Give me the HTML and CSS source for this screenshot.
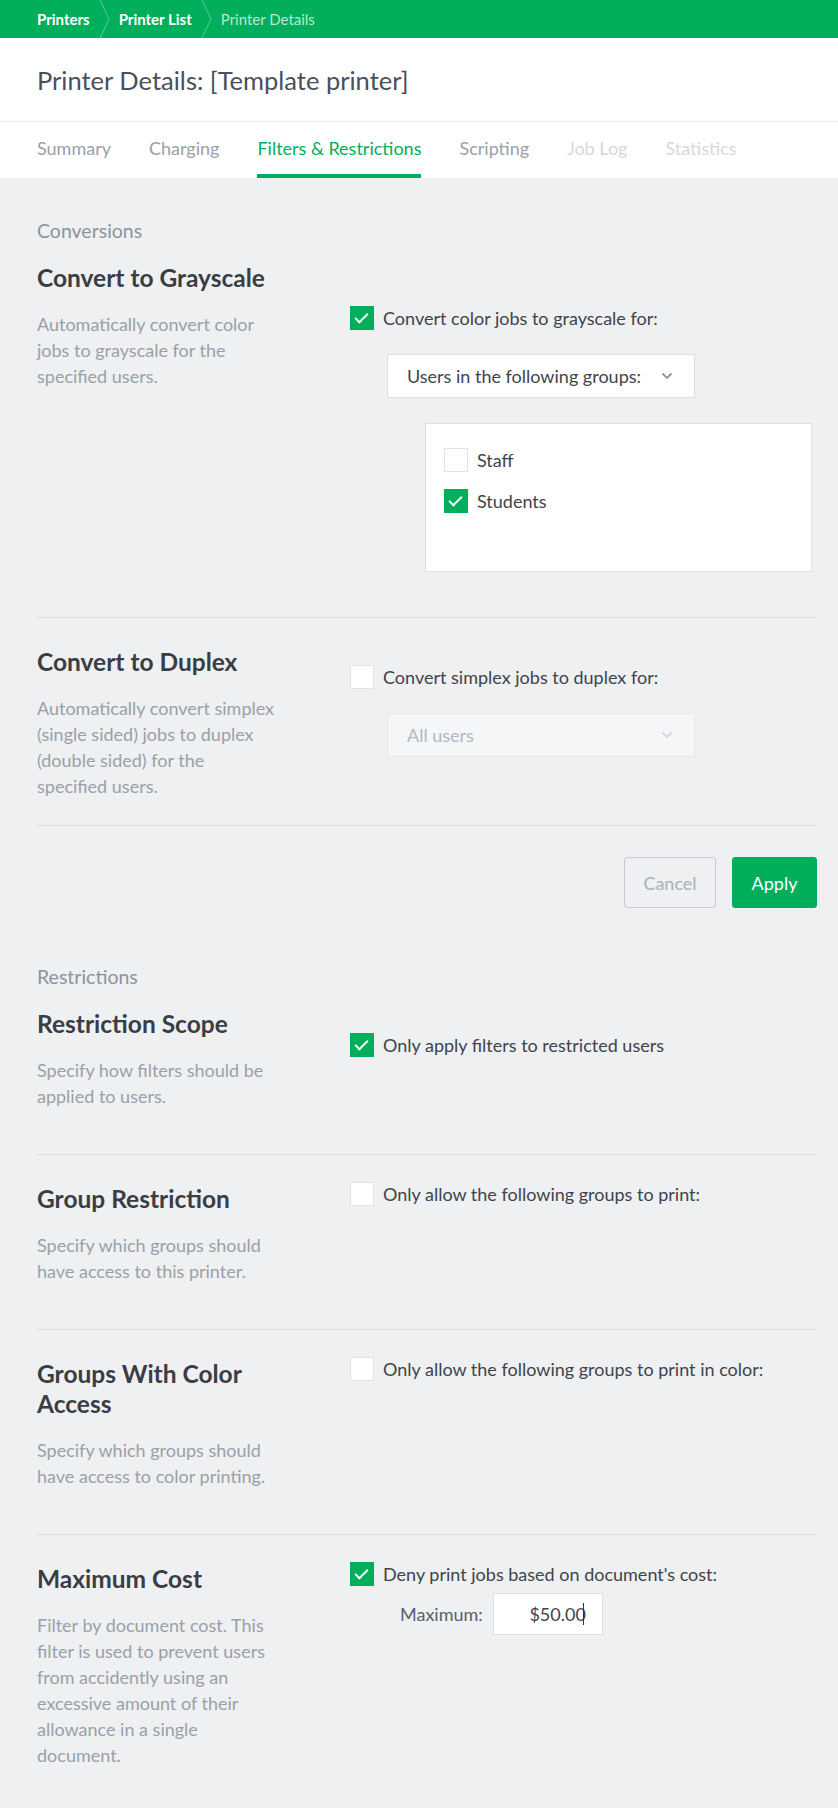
FILE: index.html
```html
<!DOCTYPE html>
<html>

<head>
	<meta charset="UTF-8">
	<title>Printer Details</title>
	<link rel="stylesheet" href="styles.css">
</head>

<body>
	<div class="crumbs">
		<a class="crumb" href="#">Printers</a>
		<svg class="crumb-sep" width="12" height="38" viewBox="0 0 12 38"><path d="M1 0 L10 19 L1 38" fill="none" stroke="rgba(255,255,255,0.35)" stroke-width="1"/></svg>
		<a class="crumb" href="#">Printer List</a>
		<svg class="crumb-sep" width="12" height="38" viewBox="0 0 12 38"><path d="M1 0 L10 19 L1 38" fill="none" stroke="rgba(255,255,255,0.35)" stroke-width="1"/></svg>
		<span class="crumb current">Printer Details</span>
	</div>

	<div class="page-head">
		<h1>Printer Details: [Template printer]</h1>
	</div>

	<div class="tabs">
		<a class="tab" href="#">Summary</a>
		<a class="tab" href="#">Charging</a>
		<a class="tab active" href="#">Filters &amp; Restrictions</a>
		<a class="tab" href="#">Scripting</a>
		<span class="tab disabled">Job Log</span>
		<span class="tab disabled">Statistics</span>
	</div>

	<div class="content">
		<h3 class="section-title">Conversions</h3>

		<div class="row first">
			<div class="row-info">
				<h4>Convert to Grayscale</h4>
				<p>Automatically convert color<br>jobs to grayscale for the specified users.</p>
			</div>
			<div class="row-fields push-lg">
				<label class="check">
					<span class="box on"></span>
					Convert color jobs to grayscale for:
				</label>
				<div class="select">
					<span>Users in the following groups:</span>
					<svg class="caret" width="12" height="8" viewBox="0 0 12 8"><path d="M1.5 1.5 L6 6 L10.5 1.5" fill="none" stroke="#8c93a0" stroke-width="1.8"/></svg>
				</div>
				<div class="group-list">
					<label class="check">
						<span class="box"></span>
						Staff
					</label>
					<label class="check">
						<span class="box on"></span>
						Students
					</label>
				</div>
			</div>
		</div>

		<div class="row short">
			<div class="row-info">
				<h4>Convert to Duplex</h4>
				<p>Automatically convert simplex (single sided) jobs to duplex (double sided) for the<br>specified users.</p>
			</div>
			<div class="row-fields push-sm">
				<label class="check">
					<span class="box"></span>
					Convert simplex jobs to duplex for:
				</label>
				<div class="select disabled">
					<span>All users</span>
					<svg class="caret" width="12" height="8" viewBox="0 0 12 8"><path d="M1.5 1.5 L6 6 L10.5 1.5" fill="none" stroke="#d3d7dd" stroke-width="1.8"/></svg>
				</div>
			</div>
		</div>

		<div class="actions">
			<button class="btn">Cancel</button>
			<button class="btn primary">Apply</button>
		</div>

		<h3 class="section-title">Restrictions</h3>

		<div class="row first">
			<div class="row-info">
				<h4>Restriction Scope</h4>
				<p>Specify how filters should be applied to users.</p>
			</div>
			<div class="row-fields push-md">
				<label class="check">
					<span class="box on"></span>
					Only apply filters to restricted users
				</label>
			</div>
		</div>

		<div class="row">
			<div class="row-info">
				<h4>Group Restriction</h4>
				<p>Specify which groups should have access to this printer.</p>
			</div>
			<div class="row-fields">
				<label class="check">
					<span class="box"></span>
					Only allow the following groups to print:
				</label>
			</div>
		</div>

		<div class="row">
			<div class="row-info">
				<h4>Groups With Color Access</h4>
				<p>Specify which groups should have access to color printing.</p>
			</div>
			<div class="row-fields">
				<label class="check">
					<span class="box"></span>
					Only allow the following groups to print in color:
				</label>
			</div>
		</div>

		<div class="row last">
			<div class="row-info">
				<h4>Maximum Cost</h4>
				<p>Filter by document cost. This filter is used to prevent users from accidently using an excessive amount of their allowance in a single<br>document.</p>
			</div>
			<div class="row-fields">
				<label class="check">
					<span class="box on"></span>
					Deny print jobs based on document's cost:
				</label>
				<div class="cost">
					<span>Maximum:</span>
					<div class="cost-input">$50.00<span class="cursor"></span></div>
				</div>
			</div>
		</div>
	</div>
</body>

</html>
```

FILE: styles.css
```css
html {
	background: #eef0f2;
}

body {
	margin: 0;
	font-family: Lato, "Open Sans", sans-serif;
	color: #3a3f48;
	font-size: 18px;
}

a {
	text-decoration: none;
	color: inherit;
}

.crumbs {
	display: flex;
	align-items: center;
	height: 38px;
	padding-left: 37px;
	background: #00ae5b;
	font-size: 15px;
	font-weight: bold;
}

.crumb {
	color: #fff;
}

.crumb.current {
	color: rgba(255, 255, 255, 0.72);
	font-weight: normal;
}

.crumb-sep {
	margin: 0 8px 0 9px;
}

.page-head {
	background: #fff;
	height: 83px;
	padding-left: 37px;
	border-bottom: 1px solid #e8eaed;
	display: flex;
	align-items: center;
}

h1 {
	margin: 0;
	font-size: 25.5px;
	font-weight: normal;
	color: #4a4f5a;
}

.tabs {
	background: #fff;
	height: 56px;
	padding-left: 37px;
	display: flex;
	gap: 38px;
}

.tab {
	display: flex;
	align-items: center;
	height: 52px;
	border-bottom: 4px solid transparent;
	font-size: 18px;
	color: #9aa0aa;
}

.tab.active {
	color: #00ae5b;
	border-bottom-color: #00ae5b;
}

.tab.disabled {
	color: #d6d9de;
}

.content {
	padding: 41px 21px 0 37px;
}

.section-title {
	margin: 0;
	font-size: 19.5px;
	line-height: 24px;
	font-weight: normal;
	color: #8d939d;
}

.row {
	display: flex;
	padding: 29px 0 45px;
	border-bottom: 1px solid #d8dbdf;
}

.row.first {
	padding-top: 20px;
}

.row.short {
	padding-bottom: 26px;
}

.row.last {
	border-bottom: none;
	padding-bottom: 41px;
}

.row-info {
	width: 255px;
	margin-right: 58px;
	flex-shrink: 0;
}

.row-info h4 {
	margin: 0;
	font-size: 24.5px;
	line-height: 30px;
	font-weight: bold;
	color: #3a3d44;
}

.row-info p {
	margin: 18px 0 0;
	font-size: 18px;
	line-height: 26px;
	color: #9ba0a8;
}

.row-fields {
	flex: 1;
	margin-top: -2px;
}

.row-fields.push-sm {
	margin-top: 18px;
}

.row-fields.push-md {
	margin-top: 24px;
}

.row-fields.push-lg {
	margin-top: 43px;
}

.check {
	display: flex;
	align-items: center;
	gap: 9px;
	line-height: 24px;
	font-size: 18px;
	color: #3f444c;
}

.box {
	width: 22px;
	height: 22px;
	border: 1px solid #dfe2e6;
	background: #fff;
	flex-shrink: 0;
	position: relative;
}

.box.on {
	background: #00ae5b;
	border-color: #00ae5b;
}

.box.on::after {
	content: "";
	position: absolute;
	left: 7px;
	top: 3px;
	width: 5px;
	height: 11px;
	border: solid #fff;
	border-width: 0 2px 2px 0;
	transform: rotate(45deg);
}

.select {
	display: flex;
	align-items: center;
	justify-content: space-between;
	box-sizing: border-box;
	width: 308px;
	height: 44px;
	margin: 24px 0 0 37px;
	padding: 0 21px 0 19px;
	background: #fff;
	border: 1px solid #dcdfe3;
	color: #3f444c;
}

.select.disabled {
	background: #f5f6f8;
	border-color: #e6e8eb;
	color: #b3b8c0;
}

.group-list {
	box-sizing: border-box;
	width: 387px;
	height: 149px;
	margin: 25px 0 0 75px;
	padding: 24px 18px;
	background: #fff;
	border: 1px solid #dcdfe3;
	display: flex;
	flex-direction: column;
	gap: 17px;
}

.actions {
	display: flex;
	justify-content: flex-end;
	gap: 16px;
	padding: 31px 0 57px;
}

.btn {
	width: 92px;
	height: 51px;
	font-family: inherit;
	font-size: 18px;
	border-radius: 3px;
	border: 1px solid #c8ccd2;
	background: transparent;
	color: #aab0b8;
}

.btn.primary {
	width: 85px;
	background: #00ae5b;
	border-color: #00ae5b;
	color: #fff;
}

.cost {
	display: flex;
	align-items: center;
	gap: 10px;
	margin: 7px 0 0 50px;
	color: #5a606a;
}

.cost-input {
	box-sizing: border-box;
	width: 110px;
	height: 42px;
	padding-right: 18px;
	display: flex;
	align-items: center;
	justify-content: flex-end;
	background: #fff;
	border: 1px solid #dcdfe3;
	color: #3f444c;
}

.cursor {
	width: 1px;
	height: 22px;
	background: #333;
	margin-left: -3px;
}
```
